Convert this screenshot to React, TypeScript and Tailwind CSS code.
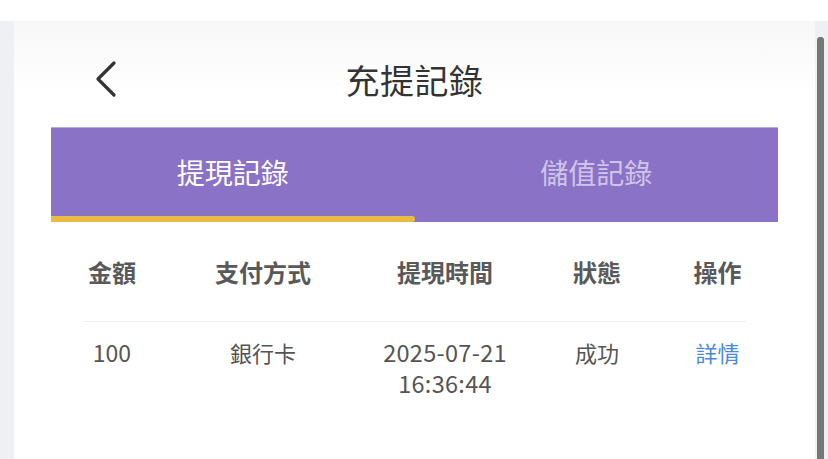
import React from "react";

const font = { fontFamily: '"Noto Sans CJK TC", "Noto Sans CJK SC", "Noto Sans", sans-serif' };

export default function App() {
  return (
    <div className="w-[828px] h-[459px] overflow-hidden bg-white flex flex-col" style={font}>
      <div className="h-[21px] bg-white shrink-0" />
      <div className="flex-1 flex bg-[#eef0f4]">
        <div className="w-[14px] shrink-0" />
        <div className="flex-1 bg-[linear-gradient(to_bottom,#f7f7f8,#ffffff_70px)] flex flex-col">
          {/* header */}
          <div className="relative h-[106px] flex items-center justify-center">
            <svg className="absolute left-[78px] top-[38px]" width="40" height="40" viewBox="0 0 40 40">
              <path d="M22 4 L6 20 L22 36" fill="none" stroke="#333" strokeWidth="3.2" strokeLinecap="round" strokeLinejoin="round" />
            </svg>
            <div className="text-[34px] leading-none text-[#333] pt-[12px] tracking-[0.5px]">充提記錄</div>
          </div>
          {/* tabs */}
          <div className="mx-[37px] h-[95px] bg-[#8a72c7] border-t border-[#b8a9e0] flex relative">
            <div className="flex-1 flex items-center justify-center text-[28px] text-white pb-[6px]">提現記錄</div>
            <div className="flex-1 flex items-center justify-center text-[28px] text-white/60 pb-[6px]">儲值記錄</div>
            <div className="absolute left-0 bottom-0 w-1/2 h-[6px] bg-[#e9bb45] rounded-r-[3px]" />
          </div>
          {/* table */}
          <div className="mx-[69px]">
            <div className="grid grid-cols-[58px_244px_120px_184px_57px] h-[100px] items-center text-[24px] font-bold text-[#595959] border-b border-[#eeeeee] whitespace-nowrap">
              <div className="flex justify-center">金額</div>
              <div className="flex justify-center">支付方式</div>
              <div className="flex justify-center">提現時間</div>
              <div className="flex justify-center">狀態</div>
              <div className="flex justify-center">操作</div>
            </div>
            <div className="grid grid-cols-[58px_244px_120px_184px_57px] pt-[15px] text-[22px] text-[#555] leading-[31px] whitespace-nowrap">
              <div className="flex justify-center text-[23px]">100</div>
              <div className="flex justify-center">銀行卡</div>
              <div className="flex flex-col items-center text-[23.5px] tracking-[0.3px]">
                <span>2025-07-21</span>
                <span>16:36:44</span>
              </div>
              <div className="flex justify-center">成功</div>
              <div className="flex justify-center text-[#4a8ad8]">詳情</div>
            </div>
          </div>
        </div>
        <div className="w-[15px] shrink-0 relative">
          <div className="absolute left-[2px] top-[16px] w-[7px] bottom-0 bg-[#777] rounded-t-[3px]" />
        </div>
      </div>
    </div>
  );
}
